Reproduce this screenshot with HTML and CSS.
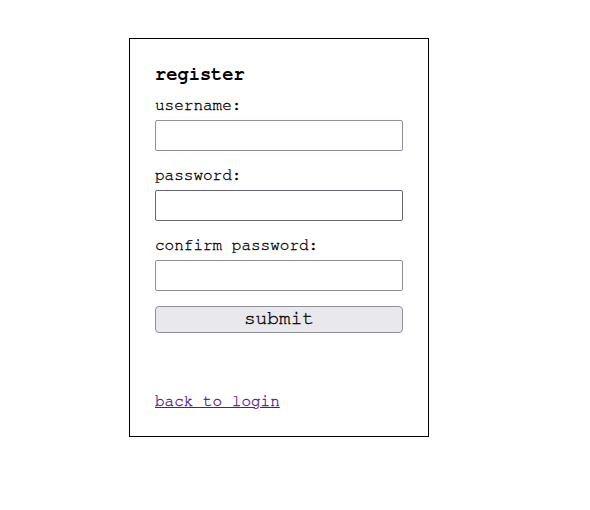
FILE: index.html
```html
<!DOCTYPE html>
<html>
<head>
<meta charset="utf-8">
<link rel="stylesheet" href="styles.css">
</head>
<body>
<div class="card">
  <h3 class="title">register</h3>
  <form class="form">
    <label class="label">username:</label>
    <input class="field" type="text">
    <label class="label">password:</label>
    <input class="field field-hover" type="password">
    <label class="label">confirm password:</label>
    <input class="field" type="password">
    <button class="submit" type="button">submit</button>
  </form>
  <a class="back" href="#">back to login</a>
</div>
</body>
</html>
```
FILE: styles.css
```css
html, body {
  margin: 0;
  padding: 0;
  background: #fff;
}
body {
  font-family: "Nimbus Mono PS", "FreeMono", "Courier", "Liberation Mono", monospace;
  font-size: 16px;
  color: #000;
  padding: 38px 0 0 129px;
}
.card {
  width: 248px;
  padding: 25px;
  border: 1px solid #000;
  display: flex;
  flex-direction: column;
}
.title {
  margin: 0;
  font-size: 18.72px;
  font-weight: bold;
  line-height: 21px;
}
.form {
  display: flex;
  flex-direction: column;
  margin-top: 11px;
}
.label {
  line-height: 16px;
  margin: 1px 0 7px 0;
  -webkit-text-stroke: 0.3px #000;
}
.field {
  box-sizing: border-box;
  width: 248px;
  height: 31px;
  margin: 0 0 15px 0;
  border: 1px solid #8f8f9d;
  border-radius: 2px;
  background: #fff;
  font-family: inherit;
  font-size: 16px;
  padding: 2px 4px;
}
.field-hover {
  border-color: #676774;
}
.submit {
  box-sizing: border-box;
  width: 248px;
  height: 27px;
  margin: 0;
  border: 1px solid #8f8f9d;
  border-radius: 4px;
  background: #e9e9ed;
  font-family: inherit;
  font-size: 19.5px;
  line-height: 21px;
  padding: 0 0 2px 0;
  color: #000;
  -webkit-text-stroke: 0.3px #000;
}
.back {
  margin-top: 60px;
  margin-bottom: 2px;
  align-self: flex-start;
  line-height: 16px;
  color: #551a8b;
  text-decoration: underline;
  -webkit-text-stroke: 0.3px #551a8b;
}
```
